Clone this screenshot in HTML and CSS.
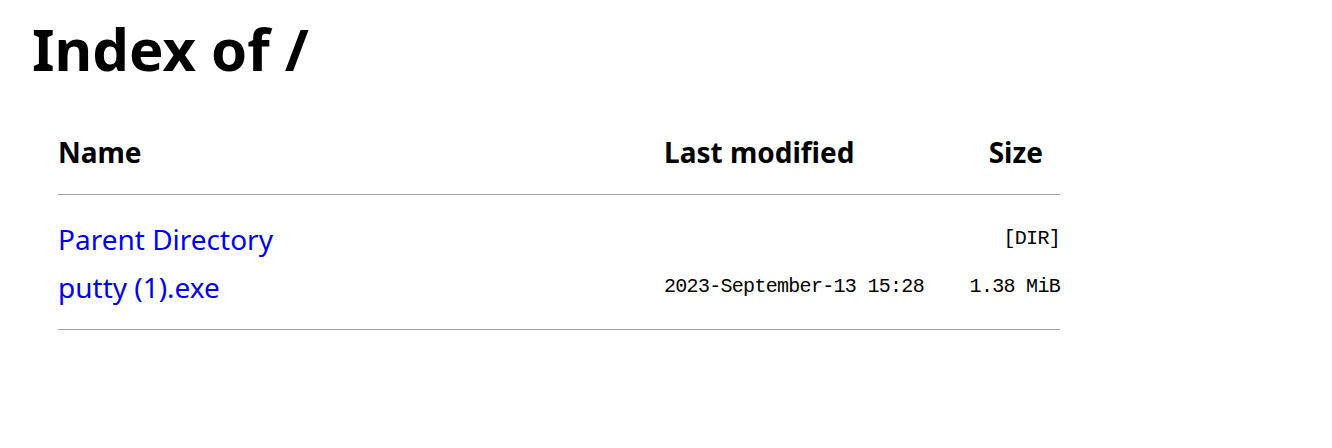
FILE: index.html
```html
<!DOCTYPE html>
<html lang="en">
<head>
    <meta charset="UTF-8">
    <meta name="viewport" content="width=device-width, initial-scale=1.0">
    <title>Index of /</title>
    <link rel="stylesheet" href="styles.css">
</head>
<body>
    <h1>Index of /</h1>

    <table class="listing">
        <thead>
            <tr>
                <th class="col-name">Name</th>
                <th class="col-date">Last modified</th>
                <th class="col-size">Size</th>
            </tr>
        </thead>
        <tbody>
            <tr class="first">
                <td><a href="../">Parent Directory</a></td>
                <td class="mono"></td>
                <td class="mono size">[DIR]</td>
            </tr>
            <tr class="last">
                <td><a href="putty%20(1).exe">putty (1).exe</a></td>
                <td class="mono">2023-September-13 15:28</td>
                <td class="mono size">1.38 MiB</td>
            </tr>
        </tbody>
    </table>
</body>
</html>
```

FILE: styles.css
```css
body {
    margin: 0;
    padding: 8px 0 0;
    font-family: "Noto Sans", "Noto Sans CJK SC", sans-serif;
    font-size: 28px;
    color: #000;
    background-color: #fff;
}
h1 {
    margin: 0;
    padding: 2px 0 0 32px;
    font-size: 58px;
    line-height: 78px;
    font-weight: bold;
}
.listing {
    border-collapse: collapse;
    width: 1002px;
    margin: 44px 0 0 58px;
}
.listing th {
    font-size: 28px;
    font-weight: bold;
    line-height: 40px;
    padding: 0 0 22px;
    text-align: left;
    border-bottom: 1px solid #a0a0a0;
}
.col-name {
    width: 606px;
}
.col-date {
    width: 290px;
}
.listing th.col-size {
    text-align: right;
    padding-right: 17px;
}
.listing td {
    line-height: 48px;
    padding: 0;
    white-space: nowrap;
}
.listing a {
    color: #0000ee;
    text-decoration: none;
}
.mono {
    font-family: "Liberation Mono", monospace;
    font-size: 20px;
    letter-spacing: -0.7px;
    font-weight: normal;
}
.size {
    text-align: right;
}
.first td {
    padding-top: 20px;
}
.last td {
    padding-bottom: 18px;
    border-bottom: 1px solid #a0a0a0;
}
```
